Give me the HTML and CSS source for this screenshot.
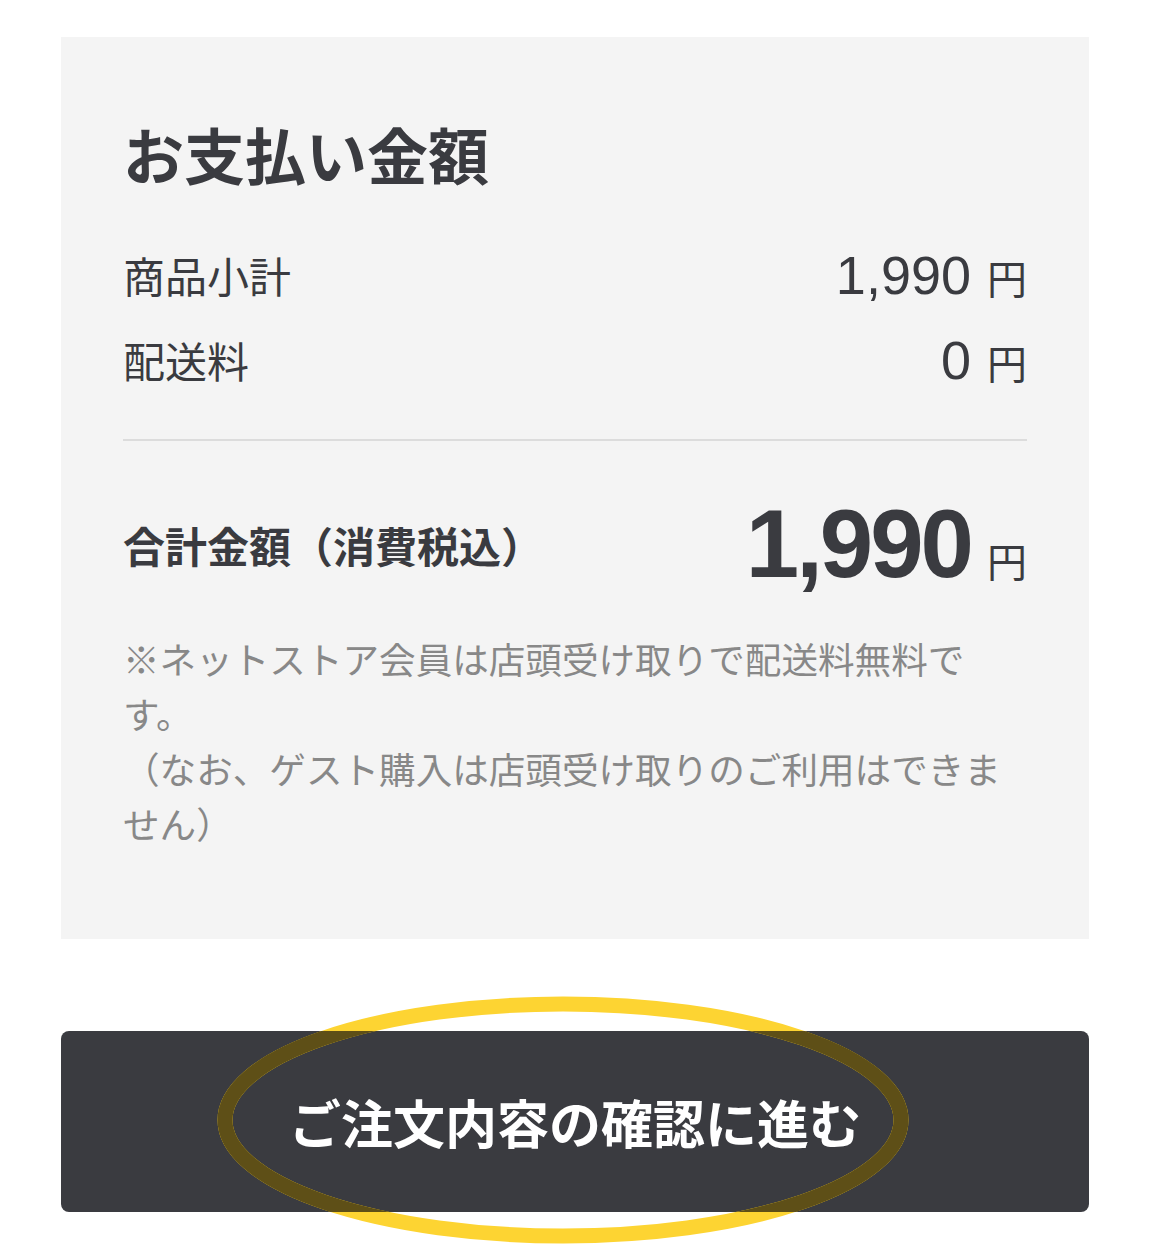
FILE: index.html
```html
<!DOCTYPE html>
<html lang="ja">
<head>
  <meta charset="UTF-8">
  <meta name="viewport" content="width=device-width, initial-scale=1.0">
  <title>お支払い金額</title>
  <link rel="stylesheet" href="styles.css">
</head>
<body>
  <div class="page">
    <section class="summary">
      <h2 class="summary-title">お支払い金額</h2>

      <div class="rows">
        <div class="row">
          <span class="row-label">商品小計</span>
          <span class="row-value"><span class="num">1,990</span><span class="yen">円</span></span>
        </div>
        <div class="row">
          <span class="row-label">配送料</span>
          <span class="row-value"><span class="num">0</span><span class="yen">円</span></span>
        </div>
      </div>

      <div class="total">
        <span class="total-label">合計金額（消費税込）</span>
        <span class="total-value"><span class="total-num">1,990</span><span class="yen">円</span></span>
      </div>

      <p class="note">※ネットストア会員は店頭受け取りで配送料無料です。<br>（なお、ゲスト購入は店頭受け取りのご利用はできません）</p>
    </section>

    <div class="action">
      <button class="next-btn" type="button">ご注文内容の確認に進む</button>
      <!-- highlight marker drawn over the button -->
      <svg class="marker" width="1150" height="260" viewBox="0 0 1150 260">
        <defs>
          <clipPath id="btn-area">
            <rect x="61" y="42" width="1028" height="181" rx="8"/>
          </clipPath>
        </defs>
        <ellipse cx="563" cy="131" rx="338" ry="116" fill="none" stroke="#fdd432" stroke-width="15"/>
        <ellipse cx="563" cy="131" rx="338" ry="116" fill="none" stroke="#5e4f17" stroke-width="15" clip-path="url(#btn-area)"/>
      </svg>
    </div>
  </div>
</body>
</html>
```

FILE: styles.css
```css
html, body {
  overflow: hidden;
}

body {
  margin: 0;
  padding: 0;
  background-color: #fff;
  font-family: "Liberation Sans", "Noto Sans CJK JP", sans-serif;
  color: #3a3b40;
}

.page {
  padding: 37px 61px 36px;
}

.summary {
  background-color: #f4f4f4;
  padding: 82px 62px 85px;
}

.summary-title {
  margin: 0;
  font-size: 61px;
  line-height: 80px;
  font-weight: bold;
}

.rows {
  margin-top: 33px;
  padding-bottom: 37px;
  border-bottom: 2px solid #dcdcdc;
}

.row {
  display: flex;
  justify-content: space-between;
  align-items: center;
  height: 85px;
}

.row-label {
  font-size: 42px;
}

.row-value {
  display: flex;
  align-items: baseline;
}

.num {
  font-size: 54px;
}

.yen {
  font-size: 40px;
  margin-left: 16px;
}

.total {
  display: flex;
  justify-content: space-between;
  align-items: center;
  height: 120px;
  margin-top: 43px;
}

.total-label {
  font-size: 42px;
  font-weight: bold;
}

.total-value {
  display: flex;
  align-items: baseline;
}

.total-num {
  font-size: 96px;
  font-weight: bold;
  letter-spacing: -3px;
}

.note {
  margin: 30px 0 0;
  font-size: 36.6px;
  line-height: 55px;
  color: #888;
}

.action {
  position: relative;
  margin-top: 92px;
}

.next-btn {
  display: block;
  width: 100%;
  height: 181px;
  border: none;
  border-radius: 8px;
  background-color: #3a3b40;
  color: #fff;
  font-family: "Noto Sans CJK JP", sans-serif;
  font-size: 52px;
  font-weight: bold;
  cursor: pointer;
}

.marker {
  position: absolute;
  left: -61px;
  top: -42px;
  pointer-events: none;
}
```
